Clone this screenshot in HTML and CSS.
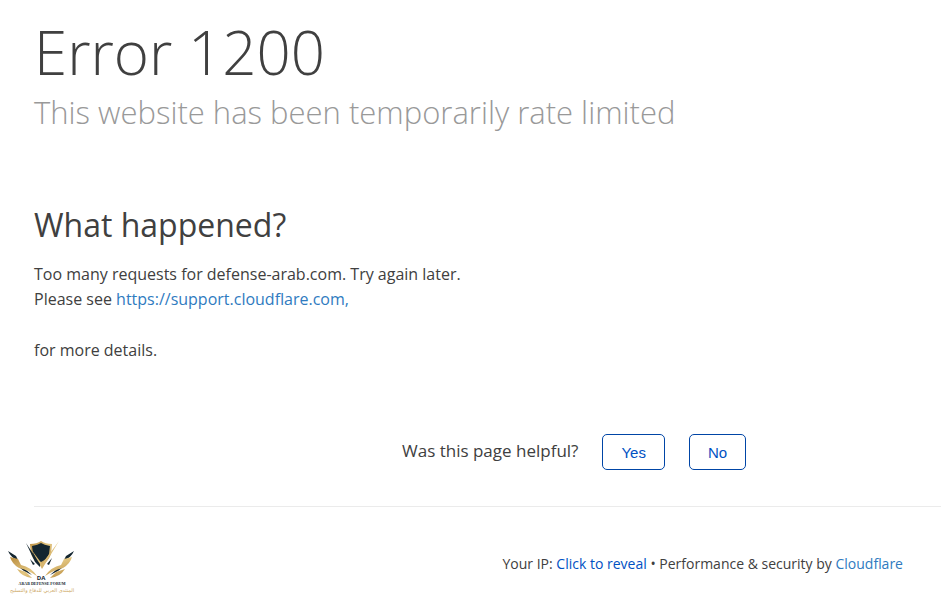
FILE: index.html
```html
<!DOCTYPE html>
<html lang="en">
<head>
<meta charset="utf-8">
<meta name="viewport" content="width=device-width, initial-scale=1">
<title>Error 1200</title>
<link rel="stylesheet" href="styles.css">
</head>
<body>
<main class="page">
  <header class="heading">
    <h1 class="title">Error 1200</h1>
    <p class="subtitle">This website has been temporarily rate limited</p>
  </header>
  <section class="details">
    <h2 class="details-title">What happened?</h2>
    <p class="details-text">Too many requests for defense-arab.com. Try again later.<br>Please see <a class="link" href="https://support.cloudflare.com">https://support.cloudflare.com,</a></p>
    <p class="details-text">for more details.</p>
  </section>
  <section class="feedback">
    <span class="feedback-label">Was this page helpful?</span>
    <button class="button" type="button">Yes</button>
    <button class="button" type="button">No</button>
  </section>
</main>
<footer class="footer">
  <svg class="logo" viewBox="0 0 70 56" role="img" aria-label="Arab Defense Forum">
    <defs>
      <linearGradient id="gold" x1="0" y1="0" x2="1" y2="1">
        <stop offset="0" stop-color="#b98c3e"/>
        <stop offset=".5" stop-color="#e3c681"/>
        <stop offset="1" stop-color="#b88a3d"/>
      </linearGradient>
    </defs>
    <path fill="url(#gold)" d="M24 4Q31 4 35 1Q39 4 46 4L45 14Q42 22 35 26Q28 22 25 14Z"/>
    <path fill="#142630" d="M26 6Q32 5 35 3Q38 5 44 6L43 14Q41 19 35 22Q29 19 27 14Z"/>
    <path fill="url(#gold)" d="M25 9 36 24 53 1 36 29Z"/>
    <path fill="#142630" d="M20 3 34 24 34 27 29 22ZM24 19 29 24 27 25ZM41 24 46 18 43 25Z"/>
    <path fill="#142630" d="M2 11 10 16 12 20Q5 18 2 11ZM9 24 19 29 26 35 18 31ZM68 11 60 16 58 20Q65 18 68 11ZM61 24 51 29 44 35 52 31Z"/>
    <path fill="url(#gold)" d="M4 17 12 19 15 25Q25 27 31 36Q22 30 13 28Q6 24 4 17ZM66 17 58 19 55 25Q45 27 39 36Q48 30 57 28Q64 24 66 17ZM11 29 20 32 26 38Q16 37 11 29ZM59 29 50 32 44 38Q54 37 59 29Z"/>
    <text class="logo-initials" x="35" y="40">DA</text>
    <text class="logo-name" x="36" y="45">ARAB DEFENSE FORUM</text>
    <text class="logo-arabic" x="36" y="52" direction="rtl">المنتدى العربي للدفاع والتسليح</text>
  </svg>
  <p class="credits">Your IP: <button class="reveal" type="button">Click to reveal</button> • Performance &amp; security by <a class="link" href="https://www.cloudflare.com">Cloudflare</a></p>
</footer>
</body>
</html>
```
FILE: styles.css
```css
* {
  box-sizing: border-box;
}

body {
  margin: 0;
  background: #fff;
  color: #404040;
  font-family: "Segoe UI", "Open Sans", "Noto Sans", sans-serif;
  font-size: 16px;
  line-height: 25px;
}

h1, h2, p {
  margin: 0;
}

.page {
  margin-left: 34px;
  padding-top: 20px;
  border-bottom: 1px solid #ebebeb;
}

.title {
  font-size: 60px;
  font-weight: 300;
  line-height: 64px;
}

.subtitle {
  color: #999;
  font-size: 31px;
  font-weight: 300;
  line-height: 56px;
}

.details {
  padding-top: 60px;
}

.details-title {
  margin-bottom: 12px;
  font-size: 32px;
  font-weight: 400;
  line-height: 50px;
}

.details-text {
  margin-bottom: 26px;
}

.link {
  color: #2f7bbf;
  text-decoration: none;
}

.feedback {
  display: flex;
  align-items: flex-start;
  padding: 45px 0 36px 368px;
}

.feedback-label {
  padding-top: 4px;
  font-size: 17px;
}

.button {
  height: 36px;
  margin-left: 24px;
  padding: 0 18px;
  border: 1px solid #0045a6;
  border-radius: 5px;
  background: #fff;
  color: #0051c3;
  font-family: "Liberation Sans", Arial, sans-serif;
  font-size: 15px;
}

.footer {
  display: flex;
  align-items: flex-start;
  justify-content: space-between;
  padding: 33px 38px 0 6px;
}

.logo {
  width: 70px;
  height: 56px;
}

.logo-initials, .logo-name, .logo-arabic {
  text-anchor: middle;
}

.logo-initials {
  fill: #142630;
  font: bold 6px "Open Sans", sans-serif;
}

.logo-name {
  fill: #142630;
  font: bold 4px "Liberation Serif", serif;
}

.logo-arabic {
  fill: #cda763;
  font: 5px "DejaVu Sans", sans-serif;
}

.credits {
  padding-top: 11px;
  font-size: 14px;
}

.reveal {
  padding: 0;
  border: 0;
  background: none;
  color: #0051c3;
  font: inherit;
}
```
